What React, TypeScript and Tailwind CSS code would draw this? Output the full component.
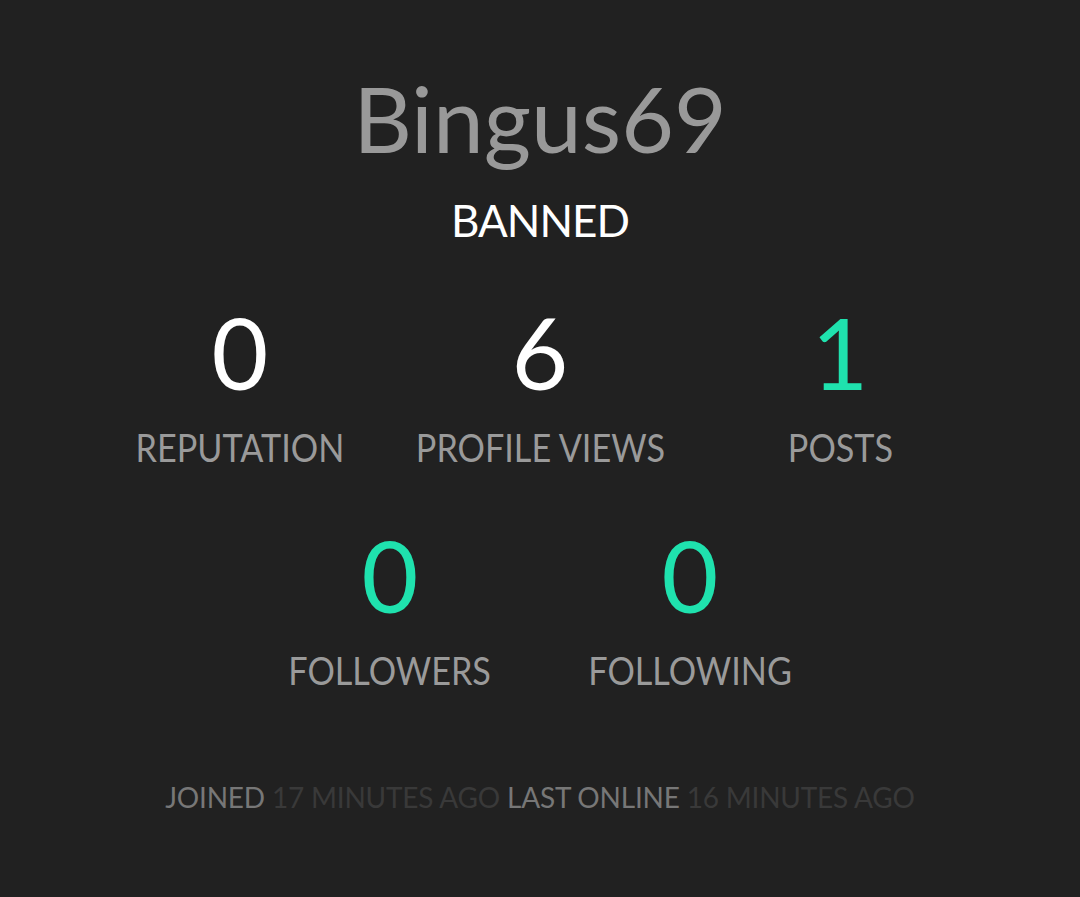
const stats = [
  { value: '0', label: 'REPUTATION', accent: false },
  { value: '6', label: 'PROFILE VIEWS', accent: false },
  { value: '1', label: 'POSTS', accent: true },
];

const social = [
  { value: '0', label: 'FOLLOWERS' },
  { value: '0', label: 'FOLLOWING' },
];

function Stat({ value, label, accent }: { value: string; label: string; accent?: boolean }) {
  return (
    <div className="flex w-[300px] flex-col items-center">
      <span
        className={
          'text-[98px] leading-[1] ' + (accent ? 'text-[#1fe2ae]' : 'text-white')
        }
      >
        {value}
      </span>
      <span className="mt-[27px] inline-block scale-x-[0.9] whitespace-nowrap text-[38px] leading-[1] text-[#9a9a9a]">
        {label}
      </span>
    </div>
  );
}

export default function App() {
  return (
    <div
      className="flex min-h-[897px] w-full flex-col items-center bg-[#212121] pt-[68px]"
      style={{ fontFamily: 'Lato, "Open Sans", sans-serif' }}
    >
      <h1 className="text-[91px] leading-[1.1] text-[#999999]">Bingus69</h1>
      <div className="mt-[30px] text-[44px] leading-[1] tracking-[-1px] text-white">BANNED</div>

      <div className="mt-[61px] flex">
        {stats.map((s) => (
          <Stat key={s.label} value={s.value} label={s.label} accent={s.accent} />
        ))}
      </div>

      <div className="mt-[60px] flex">
        {social.map((s) => (
          <Stat key={s.label} value={s.value} label={s.label} accent />
        ))}
      </div>

      <p className="mt-[94px] text-[28px] leading-[1] tracking-[-0.2px] text-[#777777]">
        JOINED <span className="text-[#393939]">17 MINUTES AGO</span> LAST ONLINE{' '}
        <span className="text-[#393939]">16 MINUTES AGO</span>
      </p>
    </div>
  );
}
